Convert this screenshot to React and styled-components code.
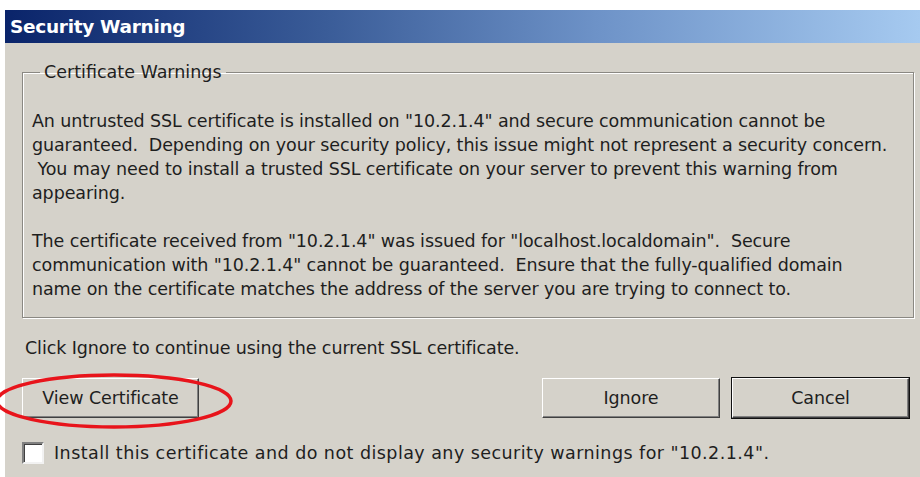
import React from 'react';
import styled, { createGlobalStyle } from 'styled-components';

const Global = createGlobalStyle`
    html, body {
        margin: 0;
        padding: 0;
        background: #ffffff;
    }
    #root {
        width: 920px;
        height: 477px;
        overflow: hidden;
    }
`;

const S = {
    Page: styled.div`
        padding-top: 10px;
        padding-left: 5px;
        height: 467px;
        background: #ffffff;
    `,
    Window: styled.div`
        display: flex;
        flex-flow: column;
        height: 100%;
        background: #d5d2ca;
        font-family: "DejaVu Sans", Verdana, sans-serif;
        color: #1e1e1e;
    `,
    TitleBar: styled.div`
        display: flex;
        align-items: center;
        height: 33px;
        padding-left: 5px;
        background: linear-gradient(90deg, #0a246a 0%, #3a5c98 35%, #6e93c8 65%, #a6caf0 100%);
        & h4 {
            margin: 0;
            color: #ffffff;
            font-family: "DejaVu Sans", Verdana, sans-serif;
            font-size: 18.5px;
            font-weight: 700;
            letter-spacing: -0.3px;
        }
    `,
    Body: styled.div`
        display: flex;
        flex-flow: column;
        padding: 19px 6px 0 17px;
        font-size: 17.5px;
    `,
    GroupBox: styled.fieldset`
        margin: 0;
        padding: 27px 0 26px 9px;
        height: 256px;
        box-sizing: border-box;
        border: 1px solid #8a8882;
        box-shadow: 1px 1px 0 #ffffff, inset 1px 1px 0 #ffffff;
        & legend {
            padding: 0 4px;
            margin-left: 8px;
            font-size: 17.5px;
        }
    `,
    Para: styled.p`
        margin: 0 0 24px;
        line-height: 24px;
        white-space: pre;
        letter-spacing: -0.1px;
    `,
    Note: styled.p`
        margin: 18px 0 0 3px;
        line-height: 24px;
        letter-spacing: -0.1px;
    `,
    ButtonRow: styled.div`
        position: relative;
        display: flex;
        align-items: center;
        margin: 18px 5px 0 0;
    `,
    Spacer: styled.div`
        flex: 1;
    `,
    Button: styled.button`
        box-sizing: border-box;
        width: ${p => p.$w}px;
        height: 40px;
        margin-left: ${p => p.$gap || 0}px;
        padding: 0;
        background: #d5d2ca;
        font-family: "DejaVu Sans", Verdana, sans-serif;
        font-size: 17.5px;
        color: #1e1e1e;
        border-style: solid;
        border-width: 1px;
        border-color: #ffffff #404040 #404040 #ffffff;
        box-shadow: inset -1px -1px 0 #808080${p => p.$default ? ', 0 0 0 1px #111111' : ''};
        letter-spacing: -0.1px;
    `,
    Highlight: styled.svg`
        position: absolute;
        left: -30px;
        top: -10px;
        width: 260px;
        height: 62px;
        overflow: visible;
        pointer-events: none;
    `,
    CheckRow: styled.label`
        display: flex;
        align-items: center;
        gap: 10px;
        margin-top: 24px;
        font-size: 17.5px;
        letter-spacing: 0.45px;
    `,
    Check: styled.span`
        box-sizing: border-box;
        width: 22px;
        height: 22px;
        background: #ffffff;
        border-style: solid;
        border-width: 2px;
        border-color: #808080 #f2f2f2 #f2f2f2 #808080;
        box-shadow: inset 1px 1px 0 #404040;
    `,
};

const first = `An untrusted SSL certificate is installed on "10.2.1.4" and secure communication cannot be
guaranteed.  Depending on your security policy, this issue might not represent a security concern.
 You may need to install a trusted SSL certificate on your server to prevent this warning from
appearing.`;

const second = `The certificate received from "10.2.1.4" was issued for "localhost.localdomain".  Secure
communication with "10.2.1.4" cannot be guaranteed.  Ensure that the fully-qualified domain
name on the certificate matches the address of the server you are trying to connect to.`;

export default function App() {
    return (
        <>
            <Global />
            <S.Page>
                <S.Window>
                    <S.TitleBar>
                        <h4>Security Warning</h4>
                    </S.TitleBar>
                    <S.Body>
                        <S.GroupBox>
                            <legend>Certificate Warnings</legend>
                            <S.Para>{first}</S.Para>
                            <S.Para>{second}</S.Para>
                        </S.GroupBox>
                        <S.Note>Click Ignore to continue using the current SSL certificate.</S.Note>
                        <S.ButtonRow>
                            <S.Button $w={177}>View Certificate</S.Button>
                            <S.Spacer />
                            <S.Button $w={178}>Ignore</S.Button>
                            <S.Button $w={177} $gap={12} $default>Cancel</S.Button>
                            <S.Highlight viewBox="0 0 260 62">
                                <ellipse cx="122" cy="33" rx="117" ry="26" fill="none" stroke="#e8141b" strokeWidth="3.5" />
                            </S.Highlight>
                        </S.ButtonRow>
                        <S.CheckRow>
                            <S.Check />
                            Install this certificate and do not display any security warnings for "10.2.1.4".
                        </S.CheckRow>
                    </S.Body>
                </S.Window>
            </S.Page>
        </>
    );
}
